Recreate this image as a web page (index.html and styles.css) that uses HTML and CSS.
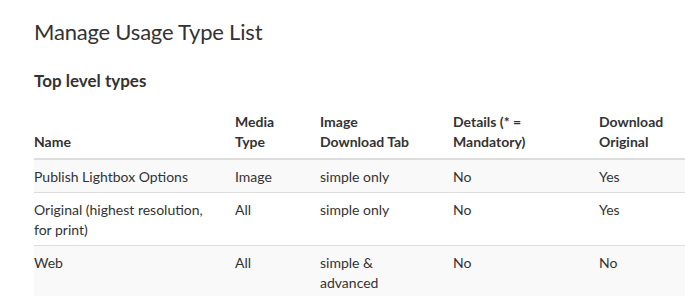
FILE: index.html
```html
<!DOCTYPE html>
<html lang="en">
<head>
    <meta charset="UTF-8">
    <meta name="viewport" content="width=device-width, initial-scale=1.0">
    <title>Manage Usage Type List</title>
    <link rel="stylesheet" href="styles.css">
</head>
<body>

<div class="page">
    <h1 class="page-title">Manage Usage Type List</h1>
    <h3 class="section-title">Top level types</h3>

    <table class="usage-table">
        <colgroup>
            <col class="col-name">
            <col class="col-media">
            <col class="col-tab">
            <col class="col-details">
            <col class="col-original">
        </colgroup>
        <thead>
            <tr>
                <th>Name</th>
                <th>Media Type</th>
                <th class="th-tab">Image Download Tab</th>
                <th>Details (* = Mandatory)</th>
                <th>Download Original</th>
            </tr>
        </thead>
        <tbody>
            <tr>
                <td>Publish Lightbox Options</td>
                <td>Image</td>
                <td>simple only</td>
                <td>No</td>
                <td>Yes</td>
            </tr>
            <tr>
                <td>Original (highest resolution, for print)</td>
                <td>All</td>
                <td>simple only</td>
                <td>No</td>
                <td>Yes</td>
            </tr>
            <tr>
                <td>Web</td>
                <td>All</td>
                <td>simple &amp; advanced</td>
                <td>No</td>
                <td>No</td>
            </tr>
        </tbody>
    </table>
</div>

</body>
</html>
```

FILE: styles.css
```css
* {
    margin: 0;
    padding: 0;
    box-sizing: border-box;
}
body {
    font-family: "Lato", "Liberation Sans", sans-serif;
    font-size: 14px;
    line-height: 20px;
    color: #333;
    background-color: #fff;
}
.page {
    padding: 18px 0 0 34px;
}
.page-title {
    font-size: 22px;
    font-weight: 400;
    letter-spacing: -0.2px;
    line-height: 28px;
}
.section-title {
    margin-top: 24px;
    font-size: 17px;
    font-weight: 700;
    line-height: 22px;
}
.usage-table {
    margin-top: 14px;
    width: 100%;
    table-layout: fixed;
    border-collapse: collapse;
}
.col-name { width: 201px; }
.col-media { width: 85px; }
.col-tab { width: 133px; }
.col-details { width: 146px; }
.usage-table th {
    text-align: left;
    vertical-align: bottom;
    font-weight: 700;
    padding: 6px 20px 6px 0;
    border-bottom: 2px solid #ddd;
}
.usage-table .th-tab {
    padding-right: 36px;
}
.usage-table td {
    vertical-align: top;
    padding: 7px 20px 5px 0;
    border-top: 1px solid #ddd;
}
.usage-table tbody tr:nth-child(odd) td {
    background-color: #f9f9f9;
}
```
